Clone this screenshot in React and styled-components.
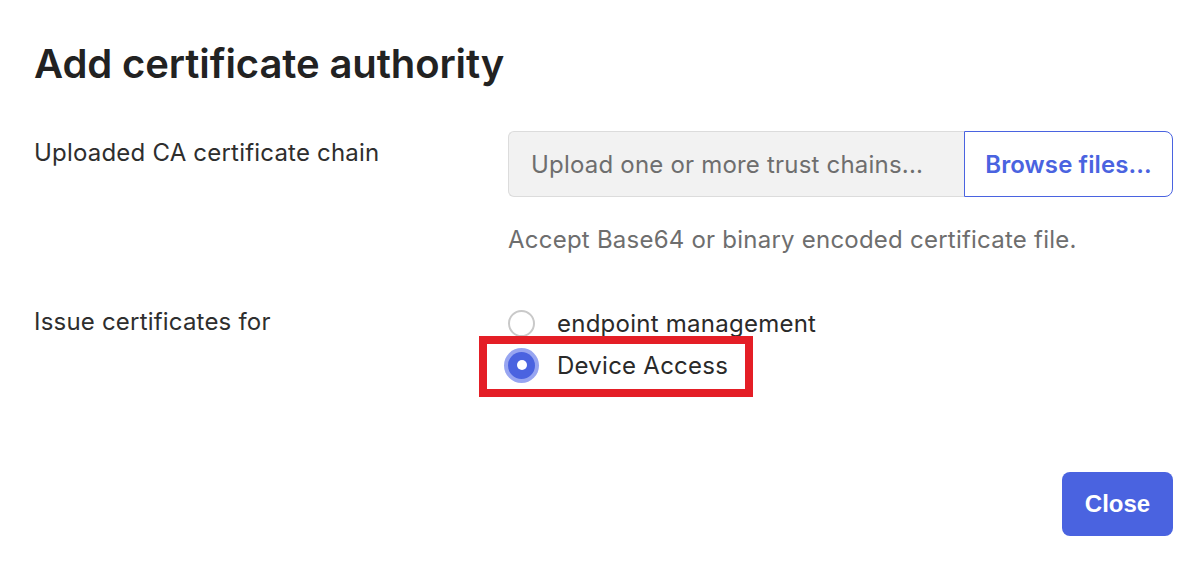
import React from "react";
import styled, { createGlobalStyle } from "styled-components";

const Global = createGlobalStyle`
  html, body { margin: 0; padding: 0; background: #ffffff; }
  body { font-family: Inter, "Noto Sans", sans-serif; color: #2a2a2a; }
  * { box-sizing: border-box; }
`;

const Page = styled.div`
  width: 1200px;
  height: 568px;
  padding: 38px 27px 0 34px;
  display: flex;
  flex-direction: column;
`;

const Title = styled.h1`
  margin: 0;
  font-family: Inter, "Noto Sans", sans-serif;
  font-weight: 600;
  font-size: 40px;
  line-height: 52px;
  letter-spacing: -0.1px;
  color: #222222;
`;

const Form = styled.div`
  margin-top: 41px;
  display: flex;
  flex-direction: column;
`;

const Row = styled.div`
  display: grid;
  grid-template-columns: 474px 1fr;
  margin-bottom: ${(p) => p.$gap || 0}px;
`;

const Label = styled.div`
  font-size: 24px;
  line-height: 32px;
  letter-spacing: 0.2px;
  color: #2e2e2e;
  padding-top: ${(p) => p.$pt || 0}px;
`;

const Field = styled.div`
  display: flex;
  flex-direction: column;
`;

const UploadGroup = styled.div`
  display: flex;
  height: 66px;
`;

const UploadInput = styled.div`
  flex: 1;
  background: #f2f2f2;
  border: 1px solid #dcdcdc;
  border-right: none;
  border-radius: 6px 0 0 6px;
  display: flex;
  align-items: center;
  padding-left: 22px;
  font-size: 24px;
  letter-spacing: 0.2px;
  color: #6e6e6e;
`;

const BrowseButton = styled.button`
  width: 209px;
  background: #ffffff;
  border: 1px solid #4a63e0;
  border-radius: 0 8px 8px 0;
  font-family: Inter, "Noto Sans", sans-serif;
  font-weight: 600;
  font-size: 24px;
  letter-spacing: 0.1px;
  color: #4a63e0;
  padding: 0;
  cursor: pointer;
`;

const Help = styled.div`
  margin-top: 28px;
  font-size: 24px;
  line-height: 30px;
  letter-spacing: 0.23px;
  color: #6e6e6e;
`;

const RadioList = styled.div`
  display: flex;
  flex-direction: column;
  gap: 8px;
`;

const RadioRow = styled.label`
  display: flex;
  align-items: center;
  gap: 22px;
  height: 34px;
  font-size: 24px;
  letter-spacing: 0.25px;
  color: #2a2a2a;
  position: relative;
`;

const Circle = styled.span`
  width: 27px;
  height: 27px;
  border-radius: 50%;
  flex: none;
  display: flex;
  align-items: center;
  justify-content: center;
  ${(p) =>
    p.$checked
      ? `background: #4a63e0; box-shadow: 0 0 0 4px #97a5f1;`
      : `border: 2px solid #c9c9c9; background: #fff;`}
  &::after {
    content: "";
    display: ${(p) => (p.$checked ? "block" : "none")};
    width: 10px;
    height: 10px;
    border-radius: 50%;
    background: #fff;
  }
`;

const Highlight = styled.span`
  position: absolute;
  left: -29px;
  top: -12px;
  width: 274px;
  height: 61px;
  border: 8px solid #e41e26;
  pointer-events: none;
`;

const Footer = styled.div`
  margin-top: auto;
  margin-bottom: 32px;
  display: flex;
  justify-content: flex-end;
`;

const CloseButton = styled.button`
  width: 111px;
  height: 64px;
  border: none;
  border-radius: 8px;
  background: #4a63e0;
  color: #ffffff;
  font-family: "Liberation Sans", Arial, sans-serif;
  font-weight: 700;
  font-size: 24px;
  cursor: pointer;
`;

export default function App() {
  return (
    <>
      <Global />
      <Page>
        <Title>Add certificate authority</Title>
        <Form>
          <Row $gap={51}>
            <Label $pt={6}>Uploaded CA certificate chain</Label>
            <Field>
              <UploadGroup>
                <UploadInput>Upload one or more trust chains...</UploadInput>
                <BrowseButton>Browse files...</BrowseButton>
              </UploadGroup>
              <Help>Accept Base64 or binary encoded certificate file.</Help>
            </Field>
          </Row>
          <Row>
            <Label>Issue certificates for</Label>
            <RadioList>
              <RadioRow>
                <Circle />
                endpoint management
              </RadioRow>
              <RadioRow>
                <Circle $checked />
                Device Access
                <Highlight />
              </RadioRow>
            </RadioList>
          </Row>
        </Form>
        <Footer>
          <CloseButton>Close</CloseButton>
        </Footer>
      </Page>
    </>
  );
}
